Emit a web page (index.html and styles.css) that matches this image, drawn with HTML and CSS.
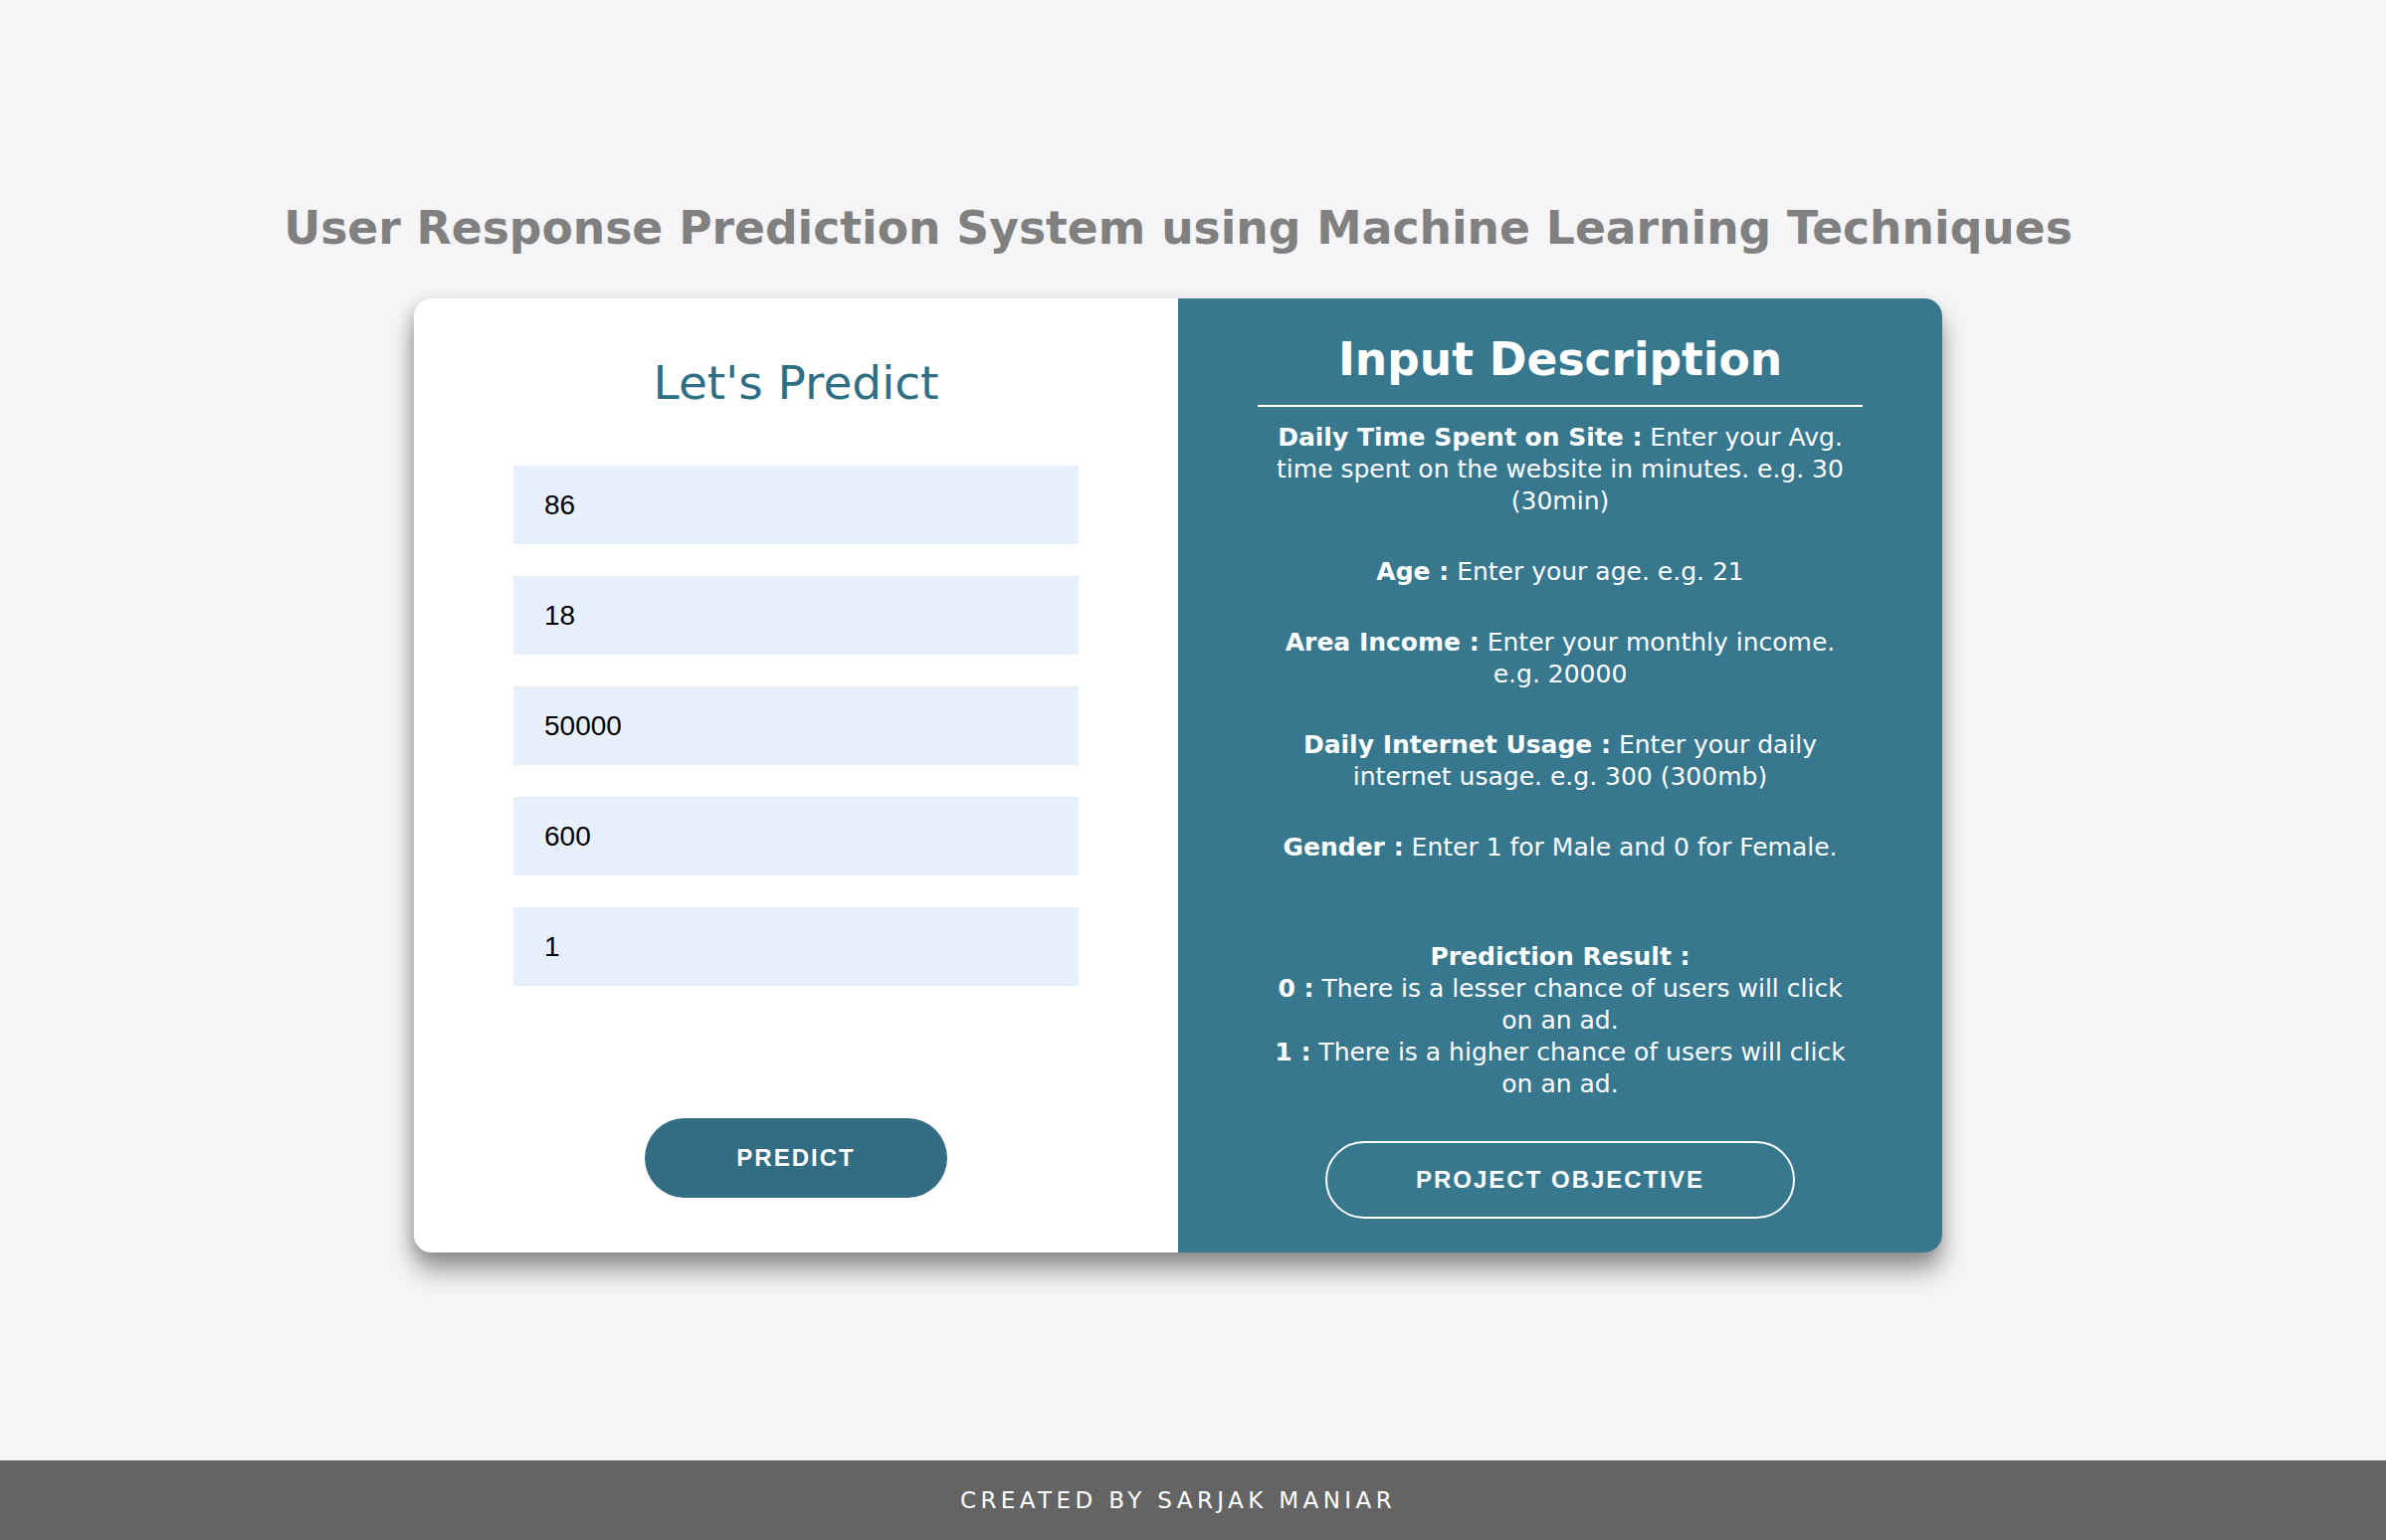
FILE: index.html
```html
<!DOCTYPE html>
<html lang="en">
<head>
<meta charset="utf-8">
<title>User Response Prediction System</title>
<link rel="stylesheet" href="styles.css">
</head>
<body>
<div class="page">
  <main class="main">
    <h1 class="title">User Response Prediction System using Machine Learning Techniques</h1>
    <div class="card">
      <section class="form-panel">
        <h2 class="form-title">Let's Predict</h2>
        <form class="form">
          <input class="field" type="text" value="86">
          <input class="field" type="text" value="18">
          <input class="field" type="text" value="50000">
          <input class="field" type="text" value="600">
          <input class="field" type="text" value="1">
          <button class="btn-predict" type="button">PREDICT</button>
        </form>
      </section>
      <section class="info-panel">
        <h2 class="info-title">Input Description</h2>
        <hr class="info-rule">
        <p class="info-item"><b>Daily Time Spent on Site :</b> Enter your Avg. time spent on the website in minutes. e.g. 30 (30min)</p>
        <p class="info-item"><b>Age :</b> Enter your age. e.g. 21</p>
        <p class="info-item"><b>Area Income :</b> Enter your monthly income. e.g. 20000</p>
        <p class="info-item"><b>Daily Internet Usage :</b> Enter your daily internet usage. e.g. 300 (300mb)</p>
        <p class="info-item"><b>Gender :</b> Enter 1 for Male and 0 for Female.</p>
        <p class="info-item info-result"><b>Prediction Result :</b><br><b>0 :</b> There is a lesser chance of users will click on an ad.<br><b>1 :</b> There is a higher chance of users will click on an ad.</p>
        <button class="btn-objective" type="button">PROJECT OBJECTIVE</button>
      </section>
    </div>
  </main>
  <footer class="footer">CREATED BY SARJAK MANIAR</footer>
</div>
</body>
</html>
```

FILE: styles.css
```css
* { box-sizing: border-box; }

html, body {
  margin: 0;
  padding: 0;
}

body {
  background: #f5f5f7;
  font-family: "DejaVu Sans", "Open Sans", sans-serif;
}

.page {
  display: flex;
  flex-direction: column;
  height: 100vh;
}

.main {
  flex: 1;
  display: flex;
  flex-direction: column;
  align-items: center;
  padding: 0 30px 0 0;
}

.title {
  margin: 201px 0 0;
  font-size: 45.6px;
  line-height: 58px;
  font-weight: 700;
  color: #808080;
  text-align: center;
  white-space: nowrap;
}

.card {
  margin-top: 41px;
  width: 1536px;
  height: 959px;
  display: grid;
  grid-template-columns: 768px 768px;
  border-radius: 18px;
  box-shadow: 0 18px 24px rgba(0, 0, 0, 0.38), -4px 4px 14px rgba(0, 0, 0, 0.12);
  overflow: hidden;
}

.form-panel {
  background: #ffffff;
  padding-top: 56px;
  display: flex;
  flex-direction: column;
  align-items: center;
}

.form-title {
  margin: 0;
  font-size: 47px;
  line-height: 58px;
  font-weight: 400;
  color: #2f6f85;
}

.form {
  margin-top: 54px;
  display: flex;
  flex-direction: column;
  align-items: center;
  gap: 32px;
}

.field {
  width: 568px;
  height: 79px;
  border: none;
  outline: none;
  background: #e8f0fe;
  padding: 0 31px;
  font-family: "Liberation Sans", Arial, sans-serif;
  font-size: 28px;
  color: #000;
}

.btn-predict {
  margin-top: 101px;
  width: 304px;
  height: 80px;
  border: none;
  border-radius: 40px;
  background: #336d83;
  color: #fff;
  font-family: "Liberation Sans", Arial, sans-serif;
  font-weight: 700;
  font-size: 24px;
  letter-spacing: 2px;
  cursor: pointer;
}

.info-panel {
  background: #37788f;
  color: #fff;
  padding: 33px 80px 0;
  display: flex;
  flex-direction: column;
  align-items: center;
  text-align: center;
}

.info-title {
  margin: 0;
  font-size: 45.5px;
  line-height: 58px;
  font-weight: 700;
  white-space: nowrap;
}

.info-rule {
  width: 608px;
  margin: 16px 0 0;
  border: none;
  border-top: 2px solid #fff;
}

.info-item {
  margin: 0;
  width: 600px;
  font-size: 25px;
  line-height: 32px;
}

.info-item + .info-item {
  margin-top: 39px;
}

.info-rule + .info-item {
  margin-top: 15px;
}

.info-item b {
  font-weight: 700;
}

.info-item.info-result {
  margin-top: 78px;
}

.btn-objective {
  margin-top: 41px;
  width: 472px;
  height: 78px;
  border: 2px solid #fff;
  border-radius: 39px;
  background: transparent;
  color: #fff;
  font-family: "Liberation Sans", Arial, sans-serif;
  font-weight: 700;
  font-size: 24px;
  letter-spacing: 2px;
  cursor: pointer;
}

.footer {
  height: 80px;
  background: #646464;
  color: #fff;
  display: flex;
  align-items: center;
  justify-content: center;
  padding-right: 30px;
  font-size: 23px;
  letter-spacing: 4.4px;
}
```
